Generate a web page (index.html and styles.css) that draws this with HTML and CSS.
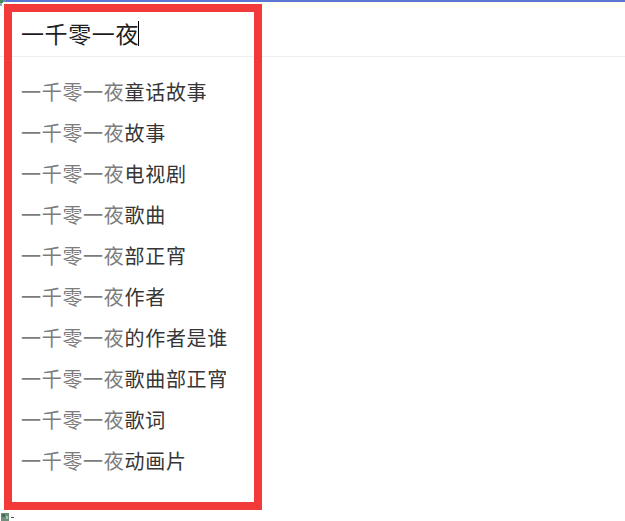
FILE: index.html
```html
<!DOCTYPE html>
<html lang="zh-CN">
<head>
<meta charset="utf-8">
<title>一千零一夜</title>
<link rel="stylesheet" href="styles.css">
</head>
<body>
<div class="topline"></div>
<div class="tint"></div>
<div class="panel">
  <div class="query"><span class="qtext">一千零一夜</span><span class="caret"></span></div>
  <ul class="suggest">
    <li><span class="hit">一千零一夜</span>童话故事</li>
    <li><span class="hit">一千零一夜</span>故事</li>
    <li><span class="hit">一千零一夜</span>电视剧</li>
    <li><span class="hit">一千零一夜</span>歌曲</li>
    <li><span class="hit">一千零一夜</span>部正宵</li>
    <li><span class="hit">一千零一夜</span>作者</li>
    <li><span class="hit">一千零一夜</span>的作者是谁</li>
    <li><span class="hit">一千零一夜</span>歌曲部正宵</li>
    <li><span class="hit">一千零一夜</span>歌词</li>
    <li><span class="hit">一千零一夜</span>动画片</li>
  </ul>
</div>
<div class="highlight"></div>
<svg class="corner-icon" width="6" height="6" viewBox="0 0 6 6"><rect x="0" y="0" width="3" height="3" fill="#4a8a5a"/><rect x="3" y="0" width="3" height="2" fill="#6a8ad0"/><rect x="0" y="3" width="2" height="3" fill="#8aa8c8"/></svg>
<svg class="foot-icon" width="16" height="9" viewBox="0 0 16 9"><rect x="1" y="1" width="8" height="8" fill="#6f8f7c"/><rect x="2" y="2" width="3" height="3" fill="#3f6f55"/><rect x="6" y="4" width="2" height="3" fill="#a8c0b0"/><rect x="11" y="5" width="3" height="1" fill="#555"/></svg>
</body>
</html>
```
FILE: styles.css
```css
html, body {
  margin: 0;
  padding: 0;
  background: #ffffff;
  width: 625px;
  height: 521px;
  overflow: hidden;
  font-family: "Noto Sans CJK SC", "Noto Sans", sans-serif;
  position: relative;
}
.topline {
  height: 2px;
  background: #5b74d6;
}
.tint {
  height: 8px;
  margin-bottom: -8px;
  background: linear-gradient(#fffff0, #ffffff);
}
.panel {
  position: relative;
}
.query {
  padding: 10px 0 2px 21px;
  height: 42px;
  display: flex;
  align-items: center;
  border-bottom: 1px solid #eeeeee;
}
.qtext {
  font-size: 23px;
  letter-spacing: 0.6px;
  color: #1e1e1e;
  line-height: 42px;
}
.caret {
  display: inline-block;
  width: 1px;
  height: 25px;
  background: #000;
  margin-left: -1px;
}
.suggest {
  list-style: none;
  margin: 0;
  padding: 14px 0 0 21px;
}
.suggest li {
  height: 41px;
  line-height: 41px;
  font-size: 20px;
  letter-spacing: 0.7px;
  color: #363636;
}
.hit {
  color: #7c7c7c;
}
.highlight {
  position: absolute;
  left: 4px;
  top: 4px;
  width: 242px;
  height: 490px;
  border: 8px solid #f23a3a;
}
.corner-icon {
  position: absolute;
  left: 0;
  top: 0;
}
.foot-icon {
  position: absolute;
  left: 0;
  top: 512px;
}
```
